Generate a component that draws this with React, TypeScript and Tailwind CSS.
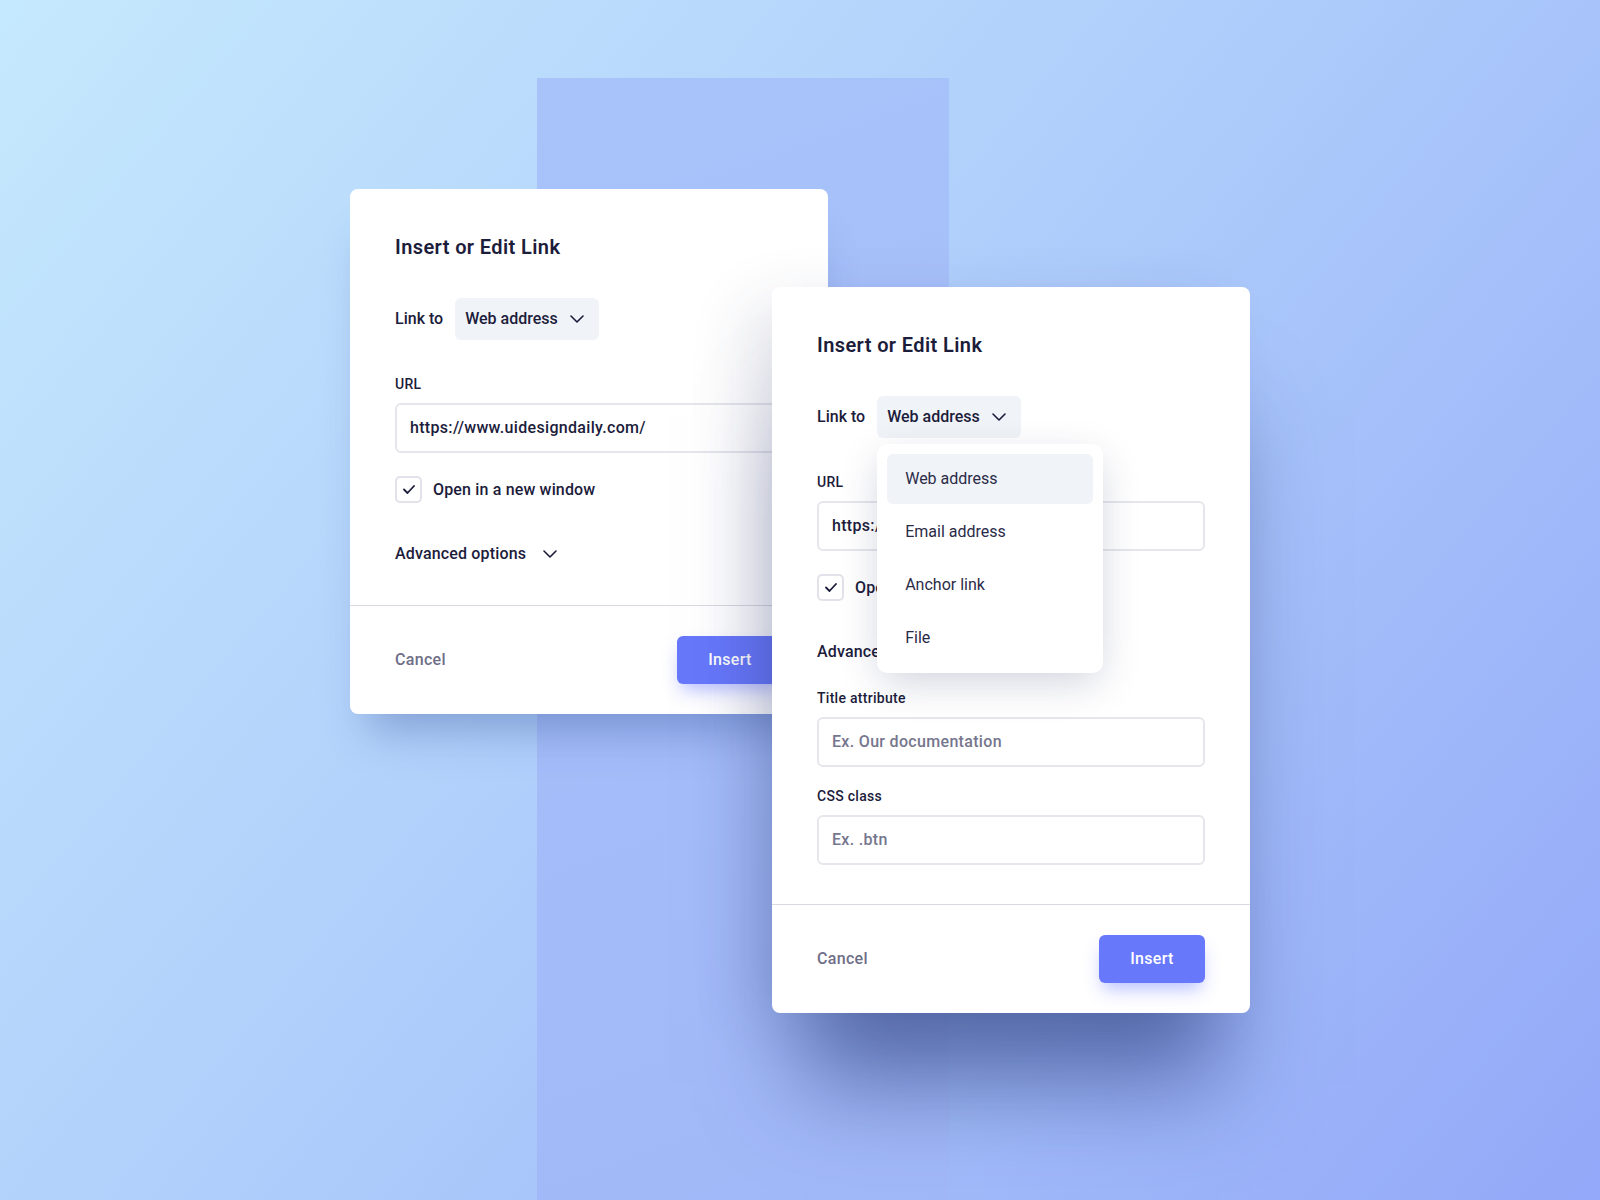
import React from 'react'

const font = { fontFamily: 'Roboto, "Liberation Sans", sans-serif' }

function Chevron() {
  return (
    <svg width="14" height="8" viewBox="0 0 14 8" fill="none" className="shrink-0">
      <path d="M1 1l6 6 6-6" stroke="#1c1c3b" strokeWidth="1.6" strokeLinecap="round" strokeLinejoin="round" />
    </svg>
  )
}

function Check() {
  return (
    <svg width="12" height="9" viewBox="0 0 12 9" fill="none">
      <path d="M1 4.5l3.5 3.5L11 1" stroke="#1c1c3b" strokeWidth="1.8" strokeLinecap="round" strokeLinejoin="round" />
    </svg>
  )
}

const menuItems = ['Web address', 'Email address', 'Anchor link', 'File']

function LinkSelect({ open }: { open?: boolean }) {
  return (
    <div className="relative">
      <button className="flex h-[42px] items-center gap-3 rounded-md bg-[#f0f3f7] pl-[10px] pr-[15px] text-[16px] font-medium text-[#1c1c3b]">
        Web address
        <Chevron />
      </button>
      {open && (
        <div className="absolute left-0 top-[48px] z-10 flex w-[226px] flex-col gap-[3px] rounded-[10px] bg-white p-[10px] shadow-[0_12px_40px_-4px_rgba(40,50,100,0.22)]">
          {menuItems.map((item, i) => (
            <div
              key={item}
              className={`flex h-[50px] items-center rounded-md px-[18px] text-[16px] text-[#2b2b48] ${i === 0 ? 'bg-[#f0f3f7]' : ''}`}
            >
              {item}
            </div>
          ))}
        </div>
      )}
    </div>
  )
}

function Field({ label, value, placeholder, top }: { label: string; value?: string; placeholder?: string; top: string }) {
  return (
    <div className={top}>
      <div className="text-[14px] font-medium leading-[20px] tracking-[0.02em] text-[#1c1c3b]">{label}</div>
      <div className="mt-[9px] flex h-[50px] items-center rounded-md border-2 border-[#e6e6ec] px-[13px] text-[16px] tracking-[0.02em]">
        {value ? (
          <span className="font-medium text-[#1c1c3b]">{value}</span>
        ) : (
          <span className="font-medium text-[#76768e]">{placeholder}</span>
        )}
      </div>
    </div>
  )
}

function LinkDialog({ expanded, className }: { expanded?: boolean; className: string }) {
  return (
    <div className={`absolute w-[478px] rounded-lg bg-white ${className}`}>
      <div className="px-[45px] pb-[39px] pt-[44px]">
        <h2 className="text-[20px] font-semibold leading-[28px] tracking-[0.02em] text-[#1c1c3b]">Insert or Edit Link</h2>

        <div className="mt-[37px] flex items-center gap-3">
          <span className="text-[16px] font-medium text-[#1c1c3b]">Link to</span>
          <LinkSelect open={expanded} />
        </div>

        <Field label="URL" value="https://www.uidesigndaily.com/" top="mt-[34px]" />

        <label className="mt-[23px] flex items-center gap-[11px]">
          <span className="flex h-[27px] w-[27px] items-center justify-center rounded-[5px] border-2 border-[#e2e2ea]">
            <Check />
          </span>
          <span className="text-[16px] font-medium tracking-[0.01em] text-[#1c1c3b]">Open in a new window</span>
        </label>

        <div className="mt-[39px] flex h-[24px] items-center gap-[17px] text-[16px] font-medium tracking-[0.01em] text-[#1c1c3b]">
          Advanced options
          <Chevron />
        </div>

        {expanded && (
          <>
            <Field label="Title attribute" placeholder="Ex. Our documentation" top="mt-[24px]" />
            <Field label="CSS class" placeholder="Ex. .btn" top="mt-[19px]" />
          </>
        )}
      </div>

      <div className="h-px bg-[#d9d9e1]" />

      <div className="flex items-center justify-between px-[45px] py-[30px]">
        <span className="text-[16px] font-medium tracking-[0.02em] text-[#6e6e88]">Cancel</span>
        <button className="h-[48px] w-[106px] rounded-md bg-[#6878fb] text-[16px] font-medium tracking-[0.02em] text-white shadow-[0_10px_18px_-4px_rgba(98,114,255,0.45)]">
          Insert
        </button>
      </div>
    </div>
  )
}

export default function App() {
  return (
    <div
      style={font}
      className="relative h-[1200px] w-[1600px] overflow-hidden bg-[linear-gradient(130deg,#c5e9fd_0%,#b0cffb_45%,#93a8f8_100%)]"
    >
      {/* backdrop column */}
      <div className="absolute bottom-0 left-[537px] top-[78px] w-[412px] bg-[linear-gradient(160deg,#a8c3fa,#a1b8f8)]" />

      <LinkDialog className="left-[350px] top-[189px] shadow-[0_34px_40px_-18px_rgba(40,70,140,0.35)]" />
      <LinkDialog
        expanded
        className="left-[772px] top-[287px] shadow-[0_100px_90px_-30px_rgba(30,45,110,0.55),-30px_10px_60px_-10px_rgba(40,50,100,0.14)]"
      />
    </div>
  )
}
